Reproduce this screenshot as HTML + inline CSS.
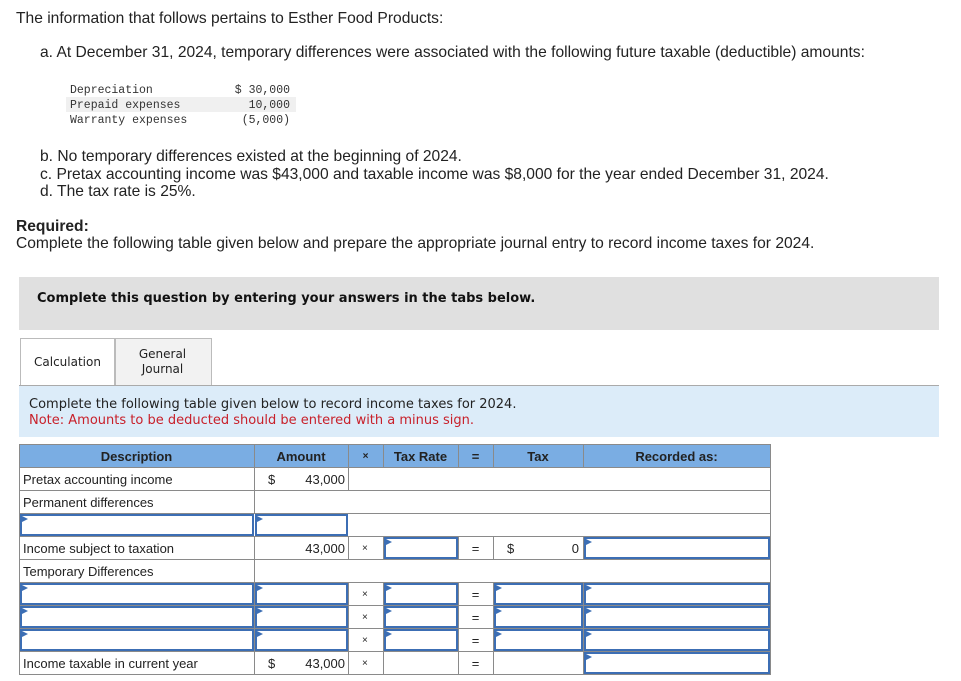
<!DOCTYPE html>
<html><head><meta charset="utf-8"><style>
body{margin:0;width:961px;height:681px;background:#fff;font-family:"Liberation Sans",Arial,sans-serif;color:#222;position:relative;overflow:hidden}
.a{position:absolute;white-space:nowrap}
.t{font-size:15.6px}
.mono{font-family:"Liberation Mono",monospace;font-size:11.5px;line-height:15px;color:#333}
.h{position:absolute;height:1px;background:#8a8a8a;left:19px;width:752px}
.v{position:absolute;width:1px;background:#8a8a8a}
.in{position:absolute;border:2px solid #3c6eb4;box-sizing:border-box;background:#fff}
.in:before{content:"";position:absolute;left:0;top:0;border-left:6px solid #3c6eb4;border-top:3px solid transparent;border-bottom:3px solid transparent}
.c{font-size:13px;color:#222;position:absolute;white-space:nowrap}
.x{font-size:10px;position:absolute}
</style></head><body>
<div class="a t" style="left:16px;top:10px">The information that follows pertains to Esther Food Products:</div>
<div class="a t" style="left:40px;top:44px">a. At December 31, 2024, temporary differences were associated with the following future taxable (deductible) amounts:</div>
<div class="a" style="left:66px;top:82px;width:230px;height:46px">
<div style="position:absolute;left:0;top:15px;width:230px;height:15px;background:#f0f0f0"></div>
<div class="a mono" style="left:4px;top:1px">Depreciation<br>Prepaid expenses<br>Warranty expenses</div>
<div class="a mono" style="left:162px;top:1px;text-align:right;width:62px">$ 30,000<br>10,000<br>(5,000)</div>
</div>
<div class="a t" style="left:40px;top:148px;line-height:17.5px">b. No temporary differences existed at the beginning of 2024.<br>c. Pretax accounting income was $43,000 and taxable income was $8,000 for the year ended December 31, 2024.<br>d. The tax rate is 25%.</div>
<div class="a t" style="left:16px;top:218px;font-weight:bold">Required:</div>
<div class="a t" style="left:16px;top:235px">Complete the following table given below and prepare the appropriate journal entry to record income taxes for 2024.</div>
<div class="a" style="left:19px;top:277px;width:920px;height:53px;background:#e0e0e0"></div>
<div class="a" style="left:37px;top:291px;font-family:'DejaVu Sans',sans-serif;font-weight:bold;font-size:13px;color:#111">Complete this question by entering your answers in the tabs below.</div>
<div class="a" style="left:20px;top:338px;width:93px;height:48px;border:1px solid #bbb;border-bottom:none;background:#fff"></div>
<div class="a" style="left:34px;top:355px;font-family:'DejaVu Sans',sans-serif;font-size:12px">Calculation</div>
<div class="a" style="left:115px;top:338px;width:95px;height:46px;border:1px solid #bbb;background:#f2f2f2"></div>
<div class="a" style="left:115px;top:347px;width:95px;text-align:center;font-family:'DejaVu Sans',sans-serif;font-size:12px;line-height:15px">General<br>Journal</div>
<div class="a" style="left:19px;top:385px;width:920px;height:1px;background:#aaa"></div>
<div class="a" style="left:19px;top:386px;width:920px;height:51px;background:#dcecf9"></div>
<div class="a" style="left:29px;top:397px;font-family:'DejaVu Sans',sans-serif;font-size:13px;line-height:16px">Complete the following table given below to record income taxes for 2024.<br><span style="color:#c8202a">Note: Amounts to be deducted should be entered with a minus sign.</span></div>

<div class="a" style="left:19px;top:444px;width:752px;height:23px;background:#7aade3"></div>
<div class="h" style="top:444px"></div>
<div class="h" style="top:467px"></div><div class="h" style="top:490px"></div><div class="h" style="top:513px"></div>
<div class="h" style="top:536px"></div><div class="h" style="top:559px"></div><div class="h" style="top:582px"></div>
<div class="h" style="top:605px"></div><div class="h" style="top:628px"></div><div class="h" style="top:651px"></div><div class="h" style="top:674px"></div>
<div class="v" style="left:19px;top:444px;height:231px"></div>
<div class="v" style="left:770px;top:444px;height:231px"></div>
<div class="v" style="left:254px;top:444px;height:23px"></div><div class="v" style="left:348px;top:444px;height:23px"></div>
<div class="v" style="left:383px;top:444px;height:23px"></div><div class="v" style="left:458px;top:444px;height:23px"></div>
<div class="v" style="left:493px;top:444px;height:23px"></div><div class="v" style="left:583px;top:444px;height:23px"></div>
<div class="c" style="left:19px;width:235px;text-align:center;top:449px;font-weight:bold">Description</div>
<div class="c" style="left:254px;width:94px;text-align:center;top:449px;font-weight:bold">Amount</div>
<div class="c" style="left:348px;width:35px;text-align:center;top:451px;font-size:10px;font-weight:bold">×</div>
<div class="c" style="left:383px;width:75px;text-align:center;top:449px;font-weight:bold">Tax Rate</div>
<div class="c" style="left:458px;width:35px;text-align:center;top:449px;font-weight:bold">=</div>
<div class="c" style="left:493px;width:90px;text-align:center;top:449px;font-weight:bold">Tax</div>
<div class="c" style="left:583px;width:187px;text-align:center;top:449px;font-weight:bold">Recorded as:</div>
<div class="v" style="left:254px;top:467px;height:23px"></div><div class="v" style="left:348px;top:467px;height:23px"></div>
<div class="c" style="left:23px;top:472px">Pretax accounting income</div>
<div class="c" style="left:268px;top:472px">$</div><div class="c" style="left:254px;width:91px;text-align:right;top:472px">43,000</div>
<div class="v" style="left:254px;top:490px;height:23px"></div>
<div class="c" style="left:23px;top:495px">Permanent differences</div>
<div class="in" style="left:20px;top:514px;width:234px;height:22px"></div>
<div class="in" style="left:255px;top:514px;width:93px;height:22px"></div>
<div class="v" style="left:254px;top:536px;height:23px"></div><div class="v" style="left:348px;top:536px;height:23px"></div>
<div class="v" style="left:383px;top:536px;height:23px"></div><div class="v" style="left:458px;top:536px;height:23px"></div>
<div class="v" style="left:493px;top:536px;height:23px"></div><div class="v" style="left:583px;top:536px;height:23px"></div>
<div class="c" style="left:23px;top:541px">Income subject to taxation</div>
<div class="c" style="left:254px;width:91px;text-align:right;top:541px">43,000</div>
<div class="x" style="left:362px;top:543px">×</div>
<div class="in" style="left:384px;top:537px;width:74px;height:22px"></div>
<div class="c" style="left:458px;width:35px;text-align:center;top:541px">=</div>
<div class="c" style="left:507px;top:541px">$</div><div class="c" style="left:493px;width:86px;text-align:right;top:541px">0</div>
<div class="in" style="left:584px;top:537px;width:186px;height:22px"></div>
<div class="v" style="left:254px;top:559px;height:23px"></div>
<div class="c" style="left:23px;top:564px">Temporary Differences</div>
<div class="v" style="left:254px;top:582px;height:92px"></div><div class="v" style="left:348px;top:582px;height:92px"></div>
<div class="v" style="left:383px;top:582px;height:92px"></div><div class="v" style="left:458px;top:582px;height:92px"></div>
<div class="v" style="left:493px;top:582px;height:92px"></div><div class="v" style="left:583px;top:582px;height:92px"></div>
<div class="in" style="left:20px;top:583px;width:234px;height:22px"></div><div class="in" style="left:255px;top:583px;width:93px;height:22px"></div>
<div class="x" style="left:362px;top:589px">×</div><div class="in" style="left:384px;top:583px;width:74px;height:22px"></div>
<div class="c" style="left:458px;width:35px;text-align:center;top:587px">=</div>
<div class="in" style="left:494px;top:583px;width:89px;height:22px"></div><div class="in" style="left:584px;top:583px;width:186px;height:22px"></div>
<div class="in" style="left:20px;top:606px;width:234px;height:22px"></div><div class="in" style="left:255px;top:606px;width:93px;height:22px"></div>
<div class="x" style="left:362px;top:612px">×</div><div class="in" style="left:384px;top:606px;width:74px;height:22px"></div>
<div class="c" style="left:458px;width:35px;text-align:center;top:610px">=</div>
<div class="in" style="left:494px;top:606px;width:89px;height:22px"></div><div class="in" style="left:584px;top:606px;width:186px;height:22px"></div>
<div class="in" style="left:20px;top:629px;width:234px;height:22px"></div><div class="in" style="left:255px;top:629px;width:93px;height:22px"></div>
<div class="x" style="left:362px;top:635px">×</div><div class="in" style="left:384px;top:629px;width:74px;height:22px"></div>
<div class="c" style="left:458px;width:35px;text-align:center;top:633px">=</div>
<div class="in" style="left:494px;top:629px;width:89px;height:22px"></div><div class="in" style="left:584px;top:629px;width:186px;height:22px"></div>
<div class="c" style="left:23px;top:656px">Income taxable in current year</div>
<div class="c" style="left:268px;top:656px">$</div><div class="c" style="left:254px;width:91px;text-align:right;top:656px">43,000</div>
<div class="x" style="left:362px;top:658px">×</div>
<div class="c" style="left:458px;width:35px;text-align:center;top:656px">=</div>
<div class="in" style="left:584px;top:652px;width:186px;height:22px"></div>
</body></html>
